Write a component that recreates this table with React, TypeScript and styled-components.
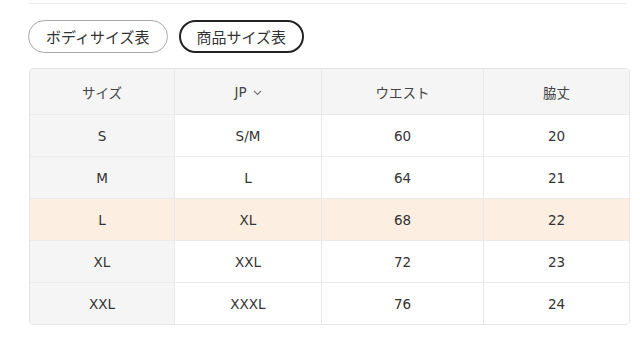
import React from "react";
import styled, { createGlobalStyle } from "styled-components";

const GlobalStyle = createGlobalStyle`
  body {
    margin: 0;
    background: #fff;
    font-family: "Noto Sans CJK JP", "Noto Sans", sans-serif;
    color: #333;
  }
`;

const Page = styled.div`
  width: 600px;
  padding: 3px 0 0 28px;
`;

const Divider = styled.div`
  height: 1px;
  background: #ececec;
  width: 598px;
`;

const Tabs = styled.div`
  display: flex;
  gap: 11px;
  margin-top: 16px;
`;

const TabButton = styled.button<{ $active?: boolean }>`
  height: 33px;
  padding: 0 ${(p) => (p.$active ? "16px" : "17px")};
  border-radius: 17px;
  border: ${(p) => (p.$active ? "2px solid #222" : "1px solid #a8a8a8")};
  background: #fff;
  font-family: inherit;
  font-size: 15px;
  color: #333;
  display: flex;
  align-items: center;
  cursor: pointer;
`;

const Table = styled.table`
  margin-top: 15px;
  margin-left: 1px;
  width: 599px;
  border-collapse: separate;
  border-spacing: 0;
  border: 1px solid #e6e6e6;
  border-radius: 4px;
  overflow: hidden;
  table-layout: fixed;
  font-family: "DejaVu Sans", "Noto Sans CJK JP", sans-serif;
  font-size: 13.5px;
`;

const HeadCell = styled.th`
  height: 45px;
  font-weight: normal;
  background: #f5f5f5;
  color: #444;
  text-align: center;
  padding: 0;
  border-bottom: 1px solid #ebebeb;
  border-right: 1px solid #e8e8e8;
  &:last-child {
    border-right: none;
  }
`;

const Row = styled.tr<{ $hl?: boolean }>`
  td {
    background: ${(p) => (p.$hl ? "#fdeee2" : "#fff")};
  }
  td:first-child {
    background: ${(p) => (p.$hl ? "#fdeee2" : "#f5f5f5")};
  }
  &:last-child td {
    border-bottom: none;
  }
`;

const Cell = styled.td`
  height: 41px;
  padding: 0;
  text-align: center;
  color: #333;
  border-bottom: 1px solid #ebebeb;
  border-right: 1px solid #e8e8e8;
  &:last-child {
    border-right: none;
  }
`;

const Caret = styled.svg`
  width: 9px;
  height: 6px;
  margin-left: 6px;
  vertical-align: middle;
`;

const rows = [
  ["S", "S/M", "60", "20"],
  ["M", "L", "64", "21"],
  ["L", "XL", "68", "22"],
  ["XL", "XXL", "72", "23"],
  ["XXL", "XXXL", "76", "24"],
];

export default function App() {
  return (
    <>
      <GlobalStyle />
      <Page>
        <Divider />
        <Tabs>
          <TabButton>ボディサイズ表</TabButton>
          <TabButton $active>商品サイズ表</TabButton>
        </Tabs>
        <Table>
          <colgroup>
            <col style={{ width: 145 }} />
            <col style={{ width: 147 }} />
            <col style={{ width: 162 }} />
            <col style={{ width: 145 }} />
          </colgroup>
          <thead>
            <tr>
              <HeadCell>サイズ</HeadCell>
              <HeadCell>
                JP
                <Caret viewBox="0 0 9 6">
                  <path d="M1 1l3.5 3.5L8 1" fill="none" stroke="#777" strokeWidth="1.2" />
                </Caret>
              </HeadCell>
              <HeadCell>ウエスト</HeadCell>
              <HeadCell>脇丈</HeadCell>
            </tr>
          </thead>
          <tbody>
            {rows.map((r) => (
              <Row key={r[0]} $hl={r[0] === "L"}>
                {r.map((c, i) => (
                  <Cell key={i}>{c}</Cell>
                ))}
              </Row>
            ))}
          </tbody>
        </Table>
      </Page>
    </>
  );
}
